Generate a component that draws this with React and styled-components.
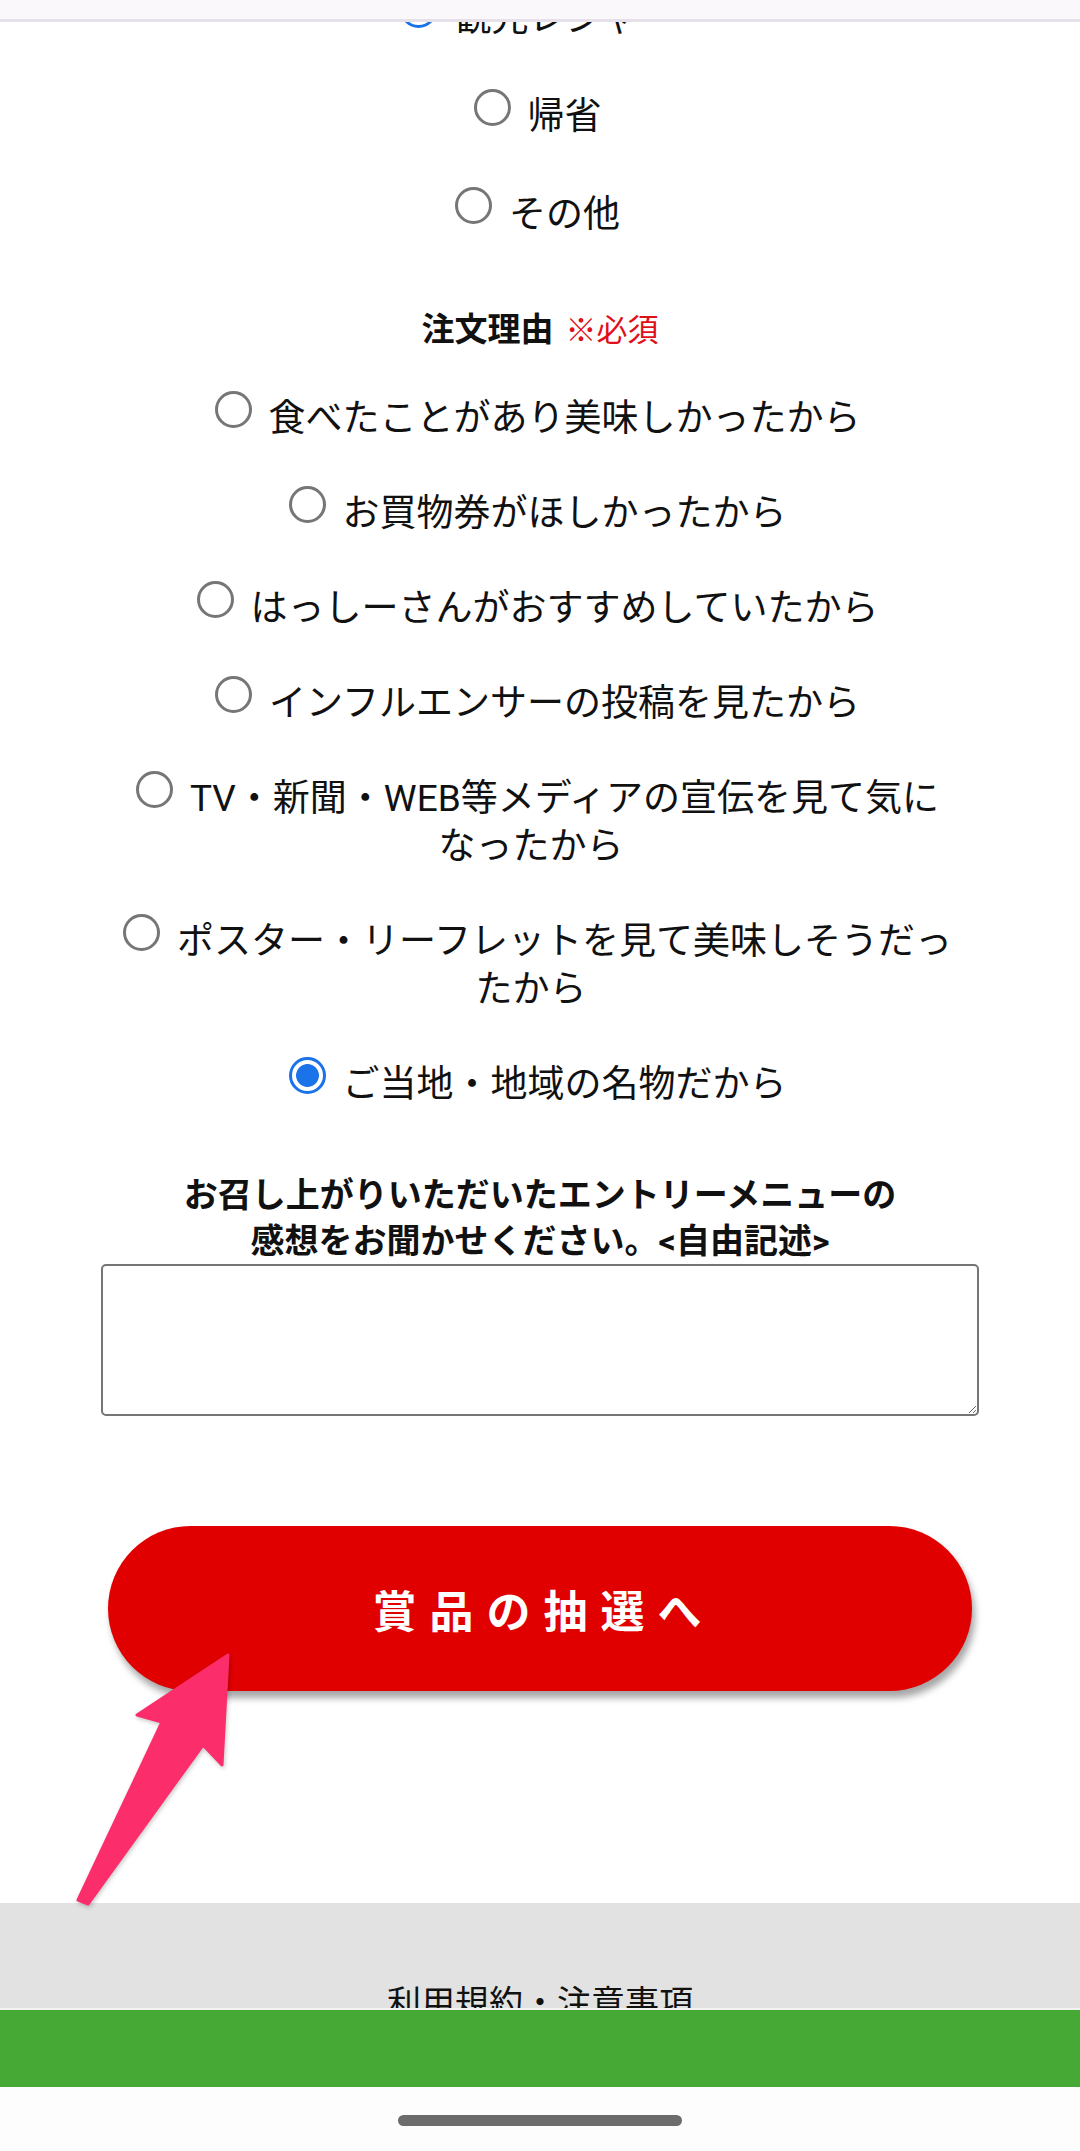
import React from 'react';
import styled, { createGlobalStyle } from 'styled-components';

const textColor = '#111111';
const ringColor = '#767676';
const checkColor = '#1a73e8';
const redColor = '#e00000';

const GlobalStyle = createGlobalStyle`
  html, body {
    margin: 0;
    padding: 0;
    background: #ffffff;
  }
  body {
    font-family: Roboto, "Noto Sans CJK JP", sans-serif;
    color: ${textColor};
  }
`;

const Page = styled.div`
  position: relative;
  width: 1080px;
  height: 2151px;
  overflow: hidden;
  display: flex;
  flex-direction: column;
  background: #ffffff;
`;

const TopBar = styled.div`
  position: absolute;
  top: 0;
  left: 0;
  right: 0;
  height: 19px;
  background: #fbf8fc;
  border-bottom: 3px solid #e5e0ea;
  z-index: 3;
`;

const Main = styled.main`
  flex: 1;
  min-height: 0;
  display: flex;
  flex-direction: column;
  align-items: center;
  margin-top: -9px;
`;

const OptionList = styled.div`
  width: 852px;
  margin-right: 18px;
  display: flex;
  flex-direction: column;
  gap: ${p => p.$gap}px;
`;

const Option = styled.label`
  display: block;
  text-align: center;
  font-size: 37px;
  line-height: 48px;
  color: ${textColor};
`;

const Radio = styled.input.attrs({ type: 'radio' })`
  appearance: none;
  -webkit-appearance: none;
  box-sizing: border-box;
  width: 37px;
  height: 37px;
  margin: 0 17px 0 13px;
  border-radius: 50%;
  border: 3px solid ${ringColor};
  background: #ffffff;
  vertical-align: 3px;

  &:checked {
    border-color: ${checkColor};
    background: radial-gradient(circle, ${checkColor} 0 11px, #ffffff 11.8px);
  }
`;

const QuestionTitle = styled.div`
  margin-top: ${p => p.$top}px;
  margin-bottom: ${p => p.$bottom}px;
  font-size: ${p => p.$size}px;
  font-weight: 700;
  line-height: ${p => p.$lh}px;
  text-align: center;
  color: ${textColor};
`;

const Required = styled.span`
  margin-left: 12px;
  font-size: 31px;
  font-weight: 400;
  color: #e0101a;
`;

const Comment = styled.textarea`
  box-sizing: border-box;
  width: 878px;
  height: 152px;
  margin: 0;
  border: 2px solid ${ringColor};
  border-radius: 5px;
  background: #ffffff;
  font: inherit;
  font-size: 34px;
`;

const SubmitButton = styled.button`
  width: 864px;
  height: 165px;
  margin-top: 110px;
  border: none;
  border-radius: 83px;
  background: ${redColor};
  box-shadow: 3px 7px 7px rgba(0, 0, 0, 0.35);
  color: #ffffff;
  font-family: inherit;
  font-size: 44px;
  font-weight: 700;
  letter-spacing: 13px;
  padding-left: 13px;
`;

const Arrow = styled.svg`
  position: absolute;
  left: 70px;
  top: 1645px;
  width: 170px;
  height: 270px;
  z-index: 2;
  filter: drop-shadow(1px 2px 2px rgba(0, 0, 0, 0.22));
`;

const Footer = styled.footer`
  height: 105px;
  overflow: hidden;
  background: #e2e2e2;
  text-align: center;
  font-size: 34px;
  line-height: 41px;
  padding-top: 80px;
  box-sizing: border-box;
  color: ${textColor};
`;

const Divider = styled.div`
  height: 2px;
  background: #f4f4f4;
`;

const BottomToolbar = styled.div`
  height: 77px;
  background: #46a935;
`;

const NavBar = styled.div`
  height: 64px;
  background: #fdfdfd;
  display: flex;
  justify-content: center;
  padding-top: 28px;
  box-sizing: border-box;
`;

const HomePill = styled.div`
  width: 284px;
  height: 11px;
  border-radius: 6px;
  background: #6c6c6c;
`;

const purposes = [
  { label: '観光レジャー', checked: true },
  { label: '帰省' },
  { label: 'その他' },
];

const reasons = [
  { label: '食べたことがあり美味しかったから' },
  { label: 'お買物券がほしかったから' },
  { label: 'はっしーさんがおすすめしていたから' },
  { label: 'インフルエンサーの投稿を見たから' },
  { label: 'TV・新聞・WEB等メディアの宣伝を見て気になったから' },
  { label: 'ポスター・リーフレットを見て美味しそうだったから' },
  { label: 'ご当地・地域の名物だから', checked: true },
];

function RadioGroup({ name, items, gap }) {
  return (
    <OptionList $gap={gap}>
      {items.map(item => (
        <Option key={item.label}>
          <Radio name={name} defaultChecked={!!item.checked} />
          {item.label}
        </Option>
      ))}
    </OptionList>
  );
}

export default function App() {
  return (
    <Page>
      <GlobalStyle />
      <TopBar />

      <Main>
        <RadioGroup name="purpose" items={purposes} gap={46} />

        <QuestionTitle $top={69} $bottom={38} $size={33} $lh={44}>
          注文理由<Required>※必須</Required>
        </QuestionTitle>
        <RadioGroup name="reason" items={reasons} gap={43} />

        <QuestionTitle $top={63} $bottom={0} $size={34} $lh={46}>
          お召し上がりいただいたエントリーメニューの
          <br />
          感想をお聞かせください。&lt;自由記述&gt;
        </QuestionTitle>
        <Comment />

        <SubmitButton type="button">賞品の抽選へ</SubmitButton>
      </Main>

      <Arrow viewBox="0 0 170 270">
        <polygon
          points="158,10 152,120 133,100 18,259 8,255 92,77 67,70"
          fill="#fc2d6b"
          stroke="#fc2d6b"
          strokeWidth="3"
          strokeLinejoin="round"
        />
      </Arrow>

      <Footer>利用規約・注意事項</Footer>
      <Divider />
      <BottomToolbar />
      <NavBar>
        <HomePill />
      </NavBar>
    </Page>
  );
}
